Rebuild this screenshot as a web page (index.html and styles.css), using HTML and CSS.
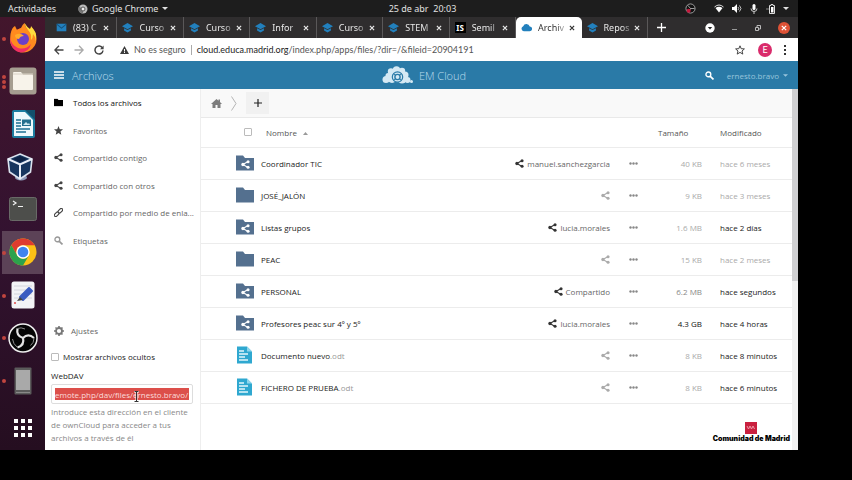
FILE: index.html
```html
<!DOCTYPE html>
<html lang="es">
<head>
  <meta charset="UTF-8" />
  <meta name="viewport" content="width=device-width, initial-scale=1" />
  <title>Archivos - EM Cloud</title>
  <link rel="stylesheet" href="styles.css">
</head>
<body>
  <!-- shared icons -->
  <svg class="sprite" width="0" height="0" aria-hidden="true">
    <symbol id="i-share" viewBox="0 0 16 16"><path d="M12.5 2.8 3.5 8l9 5.2" fill="none" stroke="currentColor" stroke-width="2"/><circle cx="3.4" cy="8" r="2.9"/><circle cx="12.6" cy="3" r="2.7"/><circle cx="12.6" cy="13" r="2.7"/></symbol>
    <symbol id="i-cap" viewBox="0 0 16 16"><path d="M8 1.5 0 6l8 4.500L16 6z"/><path d="M3 9v3.500l5 2.800 5-2.800V9l-5 2.800z"/></symbol>
    <symbol id="i-close" viewBox="0 0 10 10"><path d="M1.500 1.500l7 7m0-7l-7 7" stroke="currentColor" stroke-width="2" fill="none"/></symbol>
    <symbol id="i-folder" viewBox="0 0 18 16"><path d="M0 .5h7l2 2.500h9V15.500H0z"/></symbol>
    <symbol id="i-doc" viewBox="0 0 16 18"><path d="M1 .5h10l5 5V17.500H1z" fill="#2fa8d0"/><path d="M11 .5l5 5h-5z" fill="#8fd6ec"/><path d="M3 5h5M3 8h9M3 11h6M3 14h9" stroke="#e2f6fc" stroke-width="1.300"/></symbol>
    <symbol id="i-down" viewBox="0 0 8 4"><path d="M0 0h8L4 4z"/></symbol>
    <symbol id="i-search" viewBox="0 0 16 16"><circle cx="6" cy="6" r="4.300" fill="none" stroke="currentColor" stroke-width="2.400"/><path d="M9 9l6 6" stroke="currentColor" stroke-width="3"/></symbol>
    <symbol id="i-cloud" viewBox="0 0 16 12"><path d="M4 11.500a3.800 3.800 0 0 1-.8-7.300A5 5 0 0 1 12.700 4.500 3.500 3.500 0 0 1 12.500 11.500z"/></symbol>
    <symbol id="i-dots" viewBox="0 0 9 3"><circle cx="1.500" cy="1.500" r="1.200"/><circle cx="4.500" cy="1.500" r="1.200"/><circle cx="7.500" cy="1.500" r="1.200"/></symbol>
  </svg>

  <div class="desktop">
    <div class="topbar">
      <button class="activities">Actividades</button>
      <button class="app-menu">
        <svg width="10" height="10" viewBox="0 0 10 10"><circle cx="5" cy="5" r="4.500" fill="#bbb"/><path d="M5 5L1 2.500A4.500 4.500 0 0 0 5 9.500z" fill="#777"/><circle cx="5" cy="5" r="2" fill="#eee" stroke="#555"/></svg>
        Google Chrome
        <svg class="caret" width="6" height="3"><use href="#i-down"/></svg>
      </button>
      <span class="clock">25 de abr&nbsp; 20:03</span>
      <div class="tray">
        <svg class="tray-obs" width="11" height="11" viewBox="0 0 12 12"><circle cx="6" cy="6" r="5" fill="#111" stroke="#aaa"/><path d="M6 6L3 2.500M6 6h4.500M6 6L4 10" stroke="#aaa"/><circle cx="4" cy="8.500" r="2.200" fill="#c4183c"/></svg>
        <svg width="10" height="9" viewBox="0 0 10 9"><path d="M.5 3Q5-1 9.500 3" fill="none" stroke="#ddd"/><path d="M1.500 4Q5 1.500 8.500 4L5 8.500z" fill="#fff"/></svg>
        <svg width="10" height="9" viewBox="0 0 10 9"><path d="M0 3h2l3-3v9L2 6H0z" fill="#fff"/><path d="M6 3q1.500 1.500 0 3M7.500 1.500q3 3 0 6" fill="none" stroke="#bbb"/></svg>
        <svg width="8" height="10" viewBox="0 0 8 10"><rect x="2.500" width="3" height="6" rx="1.500" fill="#fff"/><path d="M1 4.500q0 3 3 3t3-3M4 7.500V10" fill="none" stroke="#ccc"/></svg>
        <svg width="9" height="10" viewBox="0 0 9 10"><path d="M0 5h3" stroke="#888"/><path d="M4 1.500h1V.5h2v1h1.500v8H3.500v-8z" fill="none" stroke="#ddd"/><path d="M5 3h2.500v5.500H5z" fill="#fff"/></svg>
        <svg class="caret" width="6" height="3"><use href="#i-down"/></svg>
      </div>
    </div>

    <div class="workspace">
      <nav class="dock" aria-label="Dock">
        <button class="dock-item run" aria-label="Firefox">
          <svg width="30" height="30" viewBox="0 0 30 30"><circle cx="15" cy="17" r="12" fill="#f4592b"/><path d="M2.500 11Q4 4 7 3l2 4 4-2q1-3 3.500-5Q17 4 20 7q3-1 3-3 5 4 5.500 12A13.500 13.500 0 0 1 15 29.500 13 13 0 0 1 2 17z" fill="#ff8a1f"/><path d="M2 14q1 8 8 11 8 2 13-4-2 8-10 8.500Q2 28 2 14z" fill="#ef2f63"/><path d="M16.500 0Q17 4 20 7q4 4 3 10 2-2 2-6 4 5 2 10 3-9-1-14l-3-4q0 3-1 3-3-2-5.500-6z" fill="#ffdc3e"/><circle cx="15" cy="16" r="6" fill="#6d3fc8"/><path d="M7 12q5-3 9 1-4 0-5 3-4 0-4-4z" fill="#ffab2b"/></svg>
        </button>
        <button class="dock-item run three" aria-label="Archivos">
          <svg width="28" height="28" viewBox="0 0 28 28"><rect x=".5" y=".5" width="27" height="27" rx="3" fill="#a59d90"/><path d="M4 6q0-1 1-1h7l2 2.500h9q1 0 1 1V22q0 1-1 1H5q-1 0-1-1z" fill="#f7f3ea"/><path d="M4 7h20" stroke="#d7d0c4"/></svg>
        </button>
        <button class="dock-item" aria-label="LibreOffice Writer">
          <svg width="24" height="28" viewBox="0 0 24 28"><path d="M3 0h12l9 8v18q0 2-2 2H3q-2 0-2-2V2q0-2 2-2z" fill="#1c7ca0"/><path d="M3 2h11l8 8v16H3z" fill="#eef8fc"/><path d="M14 0h10v10z" fill="#12506c"/><path d="M5 10h5M5 13h5M5 16h5M5 19h14M5 22h10" stroke="#1d6f93" stroke-width="1.400"/><path d="M11 9.500h9V16h-9z" fill="#246f8e"/><path d="M12 15l3-3 2 2 1-1 1 2z" fill="#cfe8f0"/></svg>
        </button>
        <button class="dock-item virtualbox" aria-label="VirtualBox">
          <svg width="26" height="28" viewBox="0 0 26 28"><ellipse cx="14" cy="24.500" rx="6" ry="3" fill="#8e99b8"/><path d="M13 1l12 5-1.500 13L13 26 2.500 19 1 6z" fill="#17365f" stroke="#dbe3ef" stroke-width="1.600"/><path d="M1 6l12 5.500L25 6M13 11.500V26" fill="none" stroke="#e9eff8" stroke-width="2"/><path d="M6 6l7-3 7 3-7 3z" fill="#0c2144"/></svg>
        </button>
        <button class="dock-item" aria-label="Terminal">
          <svg width="28" height="24" viewBox="0 0 28 24"><rect x=".5" y=".5" width="27" height="23" rx="2" fill="#4d4e4b" stroke="#696a67"/><path d="M4 4l3 2-3 2M9 9.500h5" fill="none" stroke="#f2f2f2" stroke-width="1.200"/></svg>
        </button>
        <button class="dock-item run active" aria-label="Google Chrome">
          <svg width="28" height="28" viewBox="0 0 28 28"><circle cx="14" cy="14" r="13.500" fill="#fbc116"/><path d="M2.300 7.250A13.500 13.500 0 0 1 25.700 7.250H14a6.750 6.750 0 0 0-5.850 10.100z" fill="#df3b2f"/><path d="M2.300 7.250l5.850 10.100A6.750 6.750 0 0 0 19.850 17.400L14 27.500A13.500 13.500 0 0 1 2.300 7.250z" fill="#2ca24c"/><circle cx="14" cy="14" r="6.700" fill="#fff"/><circle cx="14" cy="14" r="5.300" fill="#3f84ee"/></svg>
        </button>
        <button class="dock-item run" aria-label="Editor de textos">
          <svg width="24" height="28" viewBox="0 0 24 28"><rect x=".5" y=".5" width="23" height="27" rx="2.500" fill="#f3f3f6"/><path d="M3 5h18M3 9h18M3 13h18M3 17h18" stroke="#d3d4dc"/><path d="M9 16l9-9 3 3-9 9z" fill="#3b5cc0" stroke="#3b5cc0" stroke-linejoin="round" stroke-width="2"/><path d="M6 20l3-4 3 3z" fill="#444"/><circle cx="4" cy="22" r="1" fill="#e04848"/></svg>
        </button>
        <button class="dock-item run" aria-label="OBS">
          <svg width="30" height="30" viewBox="0 0 30 30"><circle cx="15" cy="15" r="14" fill="#050505" stroke="#efefef" stroke-width="1.500"/><path d="M15 15Q8 13 9.500 5.500M15 15q5.200-5.100 11 0M15 15q1.800 7.100-5.500 9.500" fill="none" stroke="#e4e4e4" stroke-width="2.200"/><path d="M9.500 5.500Q13 4 17 6M26 15q0 5-3.500 7.500M9.500 24.500Q5 21 4.500 16" fill="none" stroke="#8c8c8c"/></svg>
        </button>
        <button class="dock-item run" aria-label="Disco">
          <svg width="18" height="28" viewBox="0 0 18 28"><rect x=".5" y=".5" width="17" height="27" rx="1" fill="#5b5b5b"/><rect x="2" y="3" width="14" height="20" fill="#a9a9a9"/><path d="M2 25.500h14" stroke="#888"/></svg>
        </button>
        <button class="dock-apps" aria-label="Mostrar aplicaciones">
          <svg width="20" height="20" viewBox="0 0 20 20"><path d="M1 1h4v4H1zM8 1h4v4H8zM15 1h4v4h-4zM1 8h4v4H1zM8 8h4v4H8zM15 8h4v4h-4zM1 15h4v4H1zM8 15h4v4H8zM15 15h4v4h-4z"/></svg>
        </button>
      </nav>

      <div class="browser">
        <div class="tabstrip">
          <div class="tabs">
            <div class="tab"><svg class="fav" viewBox="0 0 16 16"><path d="M1 2.500h14v11H1z"/><path d="M1 3l7 6 7-6" fill="none" stroke="#15527c" stroke-width="1.500"/></svg><span>(83) C</span><button aria-label="Cerrar"><svg><use href="#i-close"/></svg></button></div>
            <div class="tab"><svg class="fav"><use href="#i-cap"/></svg><span>Curso</span><button aria-label="Cerrar"><svg><use href="#i-close"/></svg></button></div>
            <div class="tab"><svg class="fav"><use href="#i-cap"/></svg><span>Curso</span><button aria-label="Cerrar"><svg><use href="#i-close"/></svg></button></div>
            <div class="tab"><svg class="fav"><use href="#i-cap"/></svg><span>Infor</span><button aria-label="Cerrar"><svg><use href="#i-close"/></svg></button></div>
            <div class="tab"><svg class="fav"><use href="#i-cap"/></svg><span>Curso</span><button aria-label="Cerrar"><svg><use href="#i-close"/></svg></button></div>
            <div class="tab"><svg class="fav"><use href="#i-cap"/></svg><span>STEM</span><button aria-label="Cerrar"><svg><use href="#i-close"/></svg></button></div>
            <div class="tab"><b class="fav-is">IS</b><span>Semil</span><button aria-label="Cerrar"><svg><use href="#i-close"/></svg></button></div>
            <div class="tab current"><svg class="fav"><use href="#i-cloud"/></svg><span>Archiv</span><button aria-label="Cerrar"><svg><use href="#i-close"/></svg></button></div>
            <div class="tab"><svg class="fav"><use href="#i-cap"/></svg><span>Repos</span><button aria-label="Cerrar"><svg><use href="#i-close"/></svg></button></div>
          </div>
          <div class="window-controls">
            <button aria-label="Nueva pestaña"><svg width="9" height="9" viewBox="0 0 9 9"><path d="M4.500 0v9M0 4.500h9" stroke="#fff" stroke-width="1.300"/></svg></button>
            <button class="push" aria-label="Buscar pestañas"><svg width="10" height="10" viewBox="0 0 10 10"><circle cx="5" cy="5" r="4.700" fill="#fff"/><path d="M2.800 4h4.400L5 6.500z" fill="#222"/></svg></button>
            <button aria-label="Minimizar"><svg width="6" height="6" viewBox="0 0 6 6"><path d="M0 4.500h5" stroke="#999"/></svg></button>
            <button aria-label="Restaurar"><svg width="6" height="6" viewBox="0 0 6 6"><path d="M.5 2.500h3v3h-3zM2 2V.5h3.500V4H4" fill="none" stroke="#bbb"/></svg></button>
            <button aria-label="Cerrar ventana"><svg width="12" height="12" viewBox="0 0 12 12"><circle cx="6" cy="6" r="6" fill="#de5236"/><path d="M3.800 3.800l4.400 4.400m0-4.400L3.800 8.200" stroke="#fff" stroke-width="1.200"/></svg></button>
          </div>
        </div>

        <div class="toolbar">
          <button aria-label="Atrás"><svg width="10" height="10" viewBox="0 0 10 10"><path d="M5 .8L.9 5 5 9.200M1 5h8.500" fill="none" stroke="#444" stroke-width="1.300"/></svg></button>
          <button aria-label="Adelante"><svg width="10" height="10" viewBox="0 0 10 10"><path d="M5 .8L9.100 5 5 9.200M9 5H.5" fill="none" stroke="#aaa" stroke-width="1.300"/></svg></button>
          <button aria-label="Recargar"><svg width="10" height="10" viewBox="0 0 10 10"><path d="M8.500 3A4 4 0 1 0 9 5.500" fill="none" stroke="#444" stroke-width="1.500"/><path d="M9.600.5V4.200H6z" fill="#444"/></svg></button>
          <a class="address" href="#">
            <svg width="9" height="8" viewBox="0 0 9 8"><path d="M4.500 0L9 8H0z" fill="#3c3c3c"/><path d="M4.500 3v2.500M4.500 6v1" stroke="#fff"/></svg>
            <span class="insecure">No es seguro</span>
            <span class="url"><b>cloud.educa.madrid.org</b>/index.php/apps/files/?dir=/&amp;fileid=20904191</span>
          </a>
          <button aria-label="Favorito"><svg width="10" height="10" viewBox="0 0 10 10"><path d="M5 .8l1.200 2.900 3.200.2L7 6l.8 3.100L5 7.400 2.200 9.100 3 6 .6 3.900l3.200-.2z" fill="none" stroke="#444"/></svg></button>
          <button class="avatar">E</button>
          <button aria-label="Menú"><svg width="3" height="10" viewBox="0 0 3 10"><path d="M0 1h2M0 5h2M0 9h2" stroke="#333" stroke-width="2"/></svg></button>
        </div>

        <header class="cloud-header">
          <button class="app-name">
            <svg width="10" height="8" viewBox="0 0 10 8"><path d="M0 1h10M0 4h10M0 7h10" stroke="#fff" stroke-width="1.300"/></svg>
            Archivos
          </button>
          <a class="brand" href="#">
            <svg width="31" height="18" viewBox="0 0 31 18"><g fill="#d5e9f4"><circle cx="4" cy="13.500" r="3.500"/><circle cx="6" cy="9.500" r="2.500"/><circle cx="9" cy="5.500" r="3.200"/><circle cx="14.500" cy="4" r="3.700"/><circle cx="20" cy="5" r="3.200"/><circle cx="23" cy="9" r="3.500"/><circle cx="25.500" cy="14" r="3"/><circle cx="29.500" cy="15.500" r="1.500"/><circle cx="10" cy="12" r="5"/><circle cx="20" cy="13" r="4.500"/></g><circle cx="15.500" cy="11" r="5.200" fill="#d5e9f4" stroke="#2b7ba8" stroke-width="1.200"/><circle cx="15.500" cy="11" r="2.600" fill="none" stroke="#2b7ba8" stroke-width="1.400"/><path d="M12 8l2 1.500M19 8l-2 1.500M12 14l2-1.500M19 14l-2-1.500" stroke="#2b7ba8"/></svg>
            EM Cloud
          </a>
          <div class="header-right">
            <button aria-label="Buscar"><svg width="9" height="9"><use href="#i-search"/></svg></button>
            <button class="user">ernesto.bravo <svg width="5" height="3"><use href="#i-down"/></svg></button>
          </div>
        </header>

        <div class="files-app">
          <aside class="sidebar">
            <nav class="views">
              <a class="selected" href="#"><svg viewBox="0 0 18 16"><use href="#i-folder"/></svg><span>Todos los archivos</span></a>
              <a href="#"><svg viewBox="0 0 10 10"><path d="M5 0l1.400 3.500 3.600.2-2.800 2.400.9 3.600L5 7.800 1.900 9.700l.9-3.600L0 3.700l3.600-.2z"/></svg><span>Favoritos</span></a>
              <a href="#"><svg><use href="#i-share"/></svg><span>Compartido contigo</span></a>
              <a href="#"><svg><use href="#i-share"/></svg><span>Compartido con otros</span></a>
              <a href="#"><svg viewBox="0 0 10 10"><g fill="none" stroke="currentColor" stroke-width="1.300"><rect x="4" y="1.500" width="6" height="3.200" rx="1.600" transform="rotate(-45 7 3)"/><rect x="0" y="5.300" width="6" height="3.200" rx="1.600" transform="rotate(-45 3 7)"/></g></svg><span>Compartido por medio de enla...</span></a>
              <a href="#" class="tags"><svg><use href="#i-search"/></svg><span>Etiquetas</span></a>
            </nav>
            <div class="settings">
              <button class="settings-toggle"><svg width="10" height="10" viewBox="0 0 10 10"><circle cx="5" cy="5" r="3" fill="none" stroke="#777" stroke-width="1.800"/><path d="M5 0v2M5 8v2M0 5h2M8 5h2M1.500 1.500l1.300 1.300M7.200 7.200l1.300 1.300M8.500 1.500L7.200 2.800M2.800 7.200L1.500 8.500" stroke="#777" stroke-width="1.600"/></svg>Ajustes</button>
              <div class="option"><input type="checkbox" id="showHidden"><label for="showHidden">Mostrar archivos ocultos</label></div>
              <label class="webdav-label" for="webdav">WebDAV</label>
              <div class="webdav">
                <input type="text" id="webdav" value="emote.php/dav/files/ernesto.bravo/" readonly>
                <svg class="cursor" width="5" height="11" viewBox="0 0 5 11"><path d="M0 .5h5M2.500 0v11M0 10.500h5" stroke="#fff" stroke-width="2"/><path d="M.5.500h4M2.500 1v9M.5 10.500h4" stroke="#333"/></svg>
              </div>
              <p>Introduce esta dirección en el cliente de ownCloud para acceder a tus archivos a través de él</p>
            </div>
          </aside>

          <main class="content">
            <div class="crumbs">
              <a href="#" aria-label="Inicio"><svg width="11" height="9" viewBox="0 0 11 9"><path d="M5.500 0L0 5h1.500v4H4.500V6h2v3h3V5H11L9 3V.5H7.500v1.200z" fill="#7d7d7d"/></svg></a>
              <svg width="6" height="15" viewBox="0 0 6 15"><path d="M.5.500l4.500 7-4.500 7" fill="none" stroke="#b5b5b5"/></svg>
              <button aria-label="Nuevo"><svg width="8" height="8" viewBox="0 0 8 8"><path d="M4 0v8M0 4h8" stroke="#222" stroke-width="1.200"/></svg></button>
            </div>
            <table class="files">
              <thead>
                <tr>
                  <th class="pick"><input type="checkbox" aria-label="Seleccionar todo"></th>
                  <th class="name">Nombre <svg width="5" height="3" viewBox="0 0 5 3"><path d="M0 3h5L2.500 0z"/></svg></th>
                  <th class="share"></th>
                  <th class="menu"></th>
                  <th class="size">Tamaño</th>
                  <th class="date">Modificado</th>
                </tr>
              </thead>
              <tbody id="fileList"></tbody>
            </table>
            <footer class="madrid">
              <svg width="12" height="12" viewBox="0 0 12 12"><path d="M0 0h12v12H0z" fill="#c9203f"/><path d="M2 4l1.500 3L5 4l1.500 3L8 4l1.500 3" fill="none" stroke="#ee9aa8"/></svg>
              <strong>Comunidad de Madrid</strong>
            </footer>
          </main>
          <div class="scroll"><div class="thumb"></div></div>
        </div>
      </div>
    </div>
  </div>

  <script>
    const files = [
      { name: 'Coordinador TIC', shared: 'manuel.sanchezgarcia', icon: 'shared', size: '40 KB', date: 'hace 6 meses', old: true },
      { name: 'JOSÉ_JALÓN', icon: 'folder', size: '9 KB', date: 'hace 3 meses', old: true },
      { name: 'Listas grupos', shared: 'lucia.morales', icon: 'shared', size: '1.6 MB', date: 'hace 2 días' },
      { name: 'PEAC', icon: 'folder', size: '15 KB', date: 'hace 2 meses', old: true },
      { name: 'PERSONAL', shared: 'Compartido', icon: 'shared', size: '6.2 MB', date: 'hace segundos', mid: true },
      { name: 'Profesores peac sur 4º y 5º', shared: 'lucia.morales', icon: 'shared', size: '4.3 GB', date: 'hace 4 horas', big: true },
      { name: 'Documento nuevo', ext: '.odt', icon: 'doc', size: '8 KB', date: 'hace 8 minutos' },
      { name: 'FICHERO DE PRUEBA', ext: '.odt', icon: 'doc', size: '8 KB', date: 'hace 6 minutos' }
    ];

    function fileIcon(type) {
      if (type === 'doc') {
        return '<svg width="16" height="18"><use href="#i-doc"/></svg>';
      }
      const badge = type === 'shared' ? '<use class="badge" href="#i-share" x="5" y="5" width="9" height="9"/>' : '';
      return `<svg width="18" height="16"><use href="#i-folder"/>${badge}</svg>`;
    }

    document.getElementById('fileList').innerHTML = files.map(file => `
      <tr>
        <td class="pick">${fileIcon(file.icon)}</td>
        <td class="name"><a href="#">${file.name}<span>${file.ext || ''}</span></a></td>
        <td class="share ${file.shared ? 'on' : ''}"><button aria-label="Compartir"><svg width="9" height="9"><use href="#i-share"/></svg>${file.shared || ''}</button></td>
        <td class="menu"><button aria-label="Acciones"><svg width="9" height="3"><use href="#i-dots"/></svg></button></td>
        <td class="size ${file.big ? 'big' : ''} ${file.mid ? 'mid' : ''}">${file.size}</td>
        <td class="date ${file.old ? 'old' : ''}">${file.date}</td>
      </tr>
    `).join('');
  </script>
</body>
</html>
```
FILE: styles.css
```css
* {
  box-sizing: border-box;
}

body {
  margin: 0;
  padding: 0 54px 30px 0;
  background: #000;
  font-family: "Open Sans", "Noto Sans", sans-serif;
  font-size: 8px;
  color: #222;
}

button {
  display: flex;
  align-items: center;
  margin: 0;
  padding: 0;
  border: none;
  background: none;
  font: inherit;
  color: inherit;
  cursor: pointer;
}

a {
  color: inherit;
  text-decoration: none;
}

svg {
  display: block;
  flex: none;
  fill: currentColor;
}

.sprite {
  position: absolute;
}

input[type="checkbox"] {
  appearance: none;
  width: 8px;
  height: 8px;
  margin: 0;
  border: 1px solid #bbb;
  border-radius: 1px;
  background: #fff;
}

.desktop {
  display: flex;
  flex-direction: column;
  min-height: calc(100vh - 30px);
}

/* GNOME top bar */
.topbar {
  display: grid;
  grid-template-columns: 1fr auto 1fr;
  align-items: center;
  height: 17px;
  padding: 0 9px 0 8px;
  background: #1d1d1d;
  color: #e2e2e2;
  font-family: "Noto Sans", sans-serif;
  font-size: 9px;
}

.activities {
  grid-area: 1 / 1;
}

.app-menu {
  grid-area: 1 / 1;
  margin-left: 70px;
  gap: 4px;
}

.clock {
  margin-left: 48px;
}

.tray {
  display: flex;
  align-items: center;
  justify-content: flex-end;
  gap: 8px;
}

.tray-obs {
  margin-right: 10px;
}

.workspace {
  display: flex;
  flex: 1;
}

/* dock */
.dock {
  display: grid;
  grid-template-rows: repeat(9, 1fr) 48px;
  flex: none;
  width: 45px;
  background: linear-gradient(#43162c, #331230 50%, #250e20);
}

.dock-item {
  position: relative;
  justify-content: center;
  margin: 0 2px;
}

.dock-item.active {
  background: #5c4257;
}

.dock-item.run::before {
  content: "";
  position: absolute;
  left: 0;
  top: 20px;
  width: 4px;
  height: 4px;
  border-radius: 50%;
  background: #c0453f;
}

.dock-item.three::before {
  box-shadow: 0 -5px #c0453f, 0 5px #c0453f;
}

.dock-item.virtualbox {
  padding-right: 5px;
}

.dock-apps {
  justify-content: center;
  padding-top: 4px;
  color: #fff;
}

.browser {
  display: flex;
  flex-direction: column;
  flex: 1;
  min-width: 0;
  background: #fff;
}

/* tabs */
.tabstrip {
  display: flex;
  height: 21px;
  padding-left: 6px;
  background: #2f2d2e;
  color: #e8e8e8;
  font-family: "Noto Sans", sans-serif;
  font-size: 9px;
}

.tabs {
  display: flex;
  flex: 1;
  min-width: 0;
}

.tab {
  display: flex;
  align-items: center;
  flex: 1;
  min-width: 0;
  padding: 0 7px 0 5px;
  border-right: 1px solid #5a5859;
}

.tab span {
  flex: 1;
  margin-left: 6px;
  white-space: nowrap;
  mask-image: linear-gradient(to right, #000 65%, transparent 110%);
}

.tab button {
  margin-left: 3px;
}

.tab button svg {
  width: 6px;
  height: 6px;
}

.fav {
  width: 11px;
  height: 11px;
  color: #2280bd;
}

.fav-is {
  width: 11px;
  background: #000;
  color: #fff;
  font-size: 8px;
  text-align: center;
}

.tab.current {
  border-radius: 5px 5px 0 0;
  border-right: none;
  background: #fff;
  color: #333;
}

.window-controls {
  display: flex;
  align-items: center;
  gap: 17px;
  width: 150px;
  padding: 0 8px 0 9px;
}

.window-controls .push {
  margin-left: auto;
}

/* address bar */
.toolbar {
  display: flex;
  align-items: center;
  gap: 10px;
  height: 23px;
  padding: 0 11px 0 9px;
  font-family: Lato, sans-serif;
  font-size: 9px;
  color: #555;
}

.address {
  display: flex;
  align-items: center;
  flex: 1;
  margin-left: 6px;
  white-space: nowrap;
}

.insecure {
  margin: 0 5px;
  padding-right: 5px;
  border-right: 1px solid #aaa;
  line-height: 10px;
}

.url b {
  color: #222;
  font-weight: normal;
}

.avatar {
  justify-content: center;
  width: 14px;
  height: 14px;
  margin: 0 2px 0 3px;
  border-radius: 50%;
  background: #d92b6b;
  color: #fff;
}

/* ownCloud header */
.cloud-header {
  display: grid;
  grid-template-columns: 1fr auto 1fr;
  align-items: center;
  height: 28px;
  padding: 0 10px 0 9px;
  background: #2a7aa7;
  color: #bcdcec;
  font-size: 11px;
  font-weight: 300;
}

.app-name {
  gap: 8px;
}

.brand {
  display: flex;
  align-items: center;
  gap: 6px;
  margin-left: 6px;
}

.header-right {
  display: flex;
  align-items: center;
  justify-content: flex-end;
  gap: 13px;
  color: #fff;
}

.user {
  gap: 4px;
  color: #98c5dc;
  font-size: 8px;
  font-weight: 400;
}

.files-app {
  display: flex;
  flex: 1;
}

/* sidebar */
.sidebar {
  display: flex;
  flex-direction: column;
  flex: none;
  width: 156px;
  border-right: 1px solid #eee;
}

.views {
  display: grid;
  grid-auto-rows: 1fr;
  height: 165px;
}

.views a {
  display: flex;
  align-items: center;
  gap: 10px;
  padding: 0 4px 0 9px;
  color: #666;
  white-space: nowrap;
}

.views a.selected {
  color: #111;
}

.views svg {
  width: 9px;
  height: 9px;
  color: #444;
}

.views .selected svg {
  color: #000;
}

.views .tags svg {
  color: #999;
}

.settings {
  margin-top: auto;
  padding: 0 7px 6px 6px;
}

.settings-toggle {
  gap: 7px;
  margin: 0 0 15px 3px;
  color: #666;
}

.option {
  display: flex;
  align-items: center;
  gap: 4px;
  margin-bottom: 8px;
}

.webdav-label {
  display: block;
  margin-bottom: 3px;
}

.webdav {
  position: relative;
}

.webdav input {
  width: 100%;
  height: 20px;
  padding: 3px;
  border: 1px solid #ddd;
  border-radius: 2px;
  background: #dc4f4a content-box;
  color: #fbdcda;
  font: inherit;
}

.cursor {
  position: absolute;
  left: 83px;
  top: 7px;
}

.settings p {
  margin: 1px 0 0;
  color: #888;
  line-height: 13px;
}

/* file list */
.content {
  display: flex;
  flex-direction: column;
  flex: 1;
  min-width: 0;
}

.crumbs {
  display: flex;
  align-items: center;
  gap: 9px;
  height: 29px;
  padding-left: 10px;
  border-bottom: 1px solid #e9e9e9;
  background: #f9f9f9;
}

.crumbs button {
  justify-content: center;
  width: 23px;
  height: 22px;
  background: #f1f1f1;
}

.files {
  width: 100%;
  border-collapse: collapse;
  table-layout: fixed;
}

.files th,
.files td {
  height: 32px;
  padding: 0;
  border-bottom: 1px solid #ececec;
  text-align: left;
  font-weight: normal;
  white-space: nowrap;
}

.files th {
  height: 29px;
  color: #555;
}

.files .pick {
  width: 56px;
  padding-left: 35px;
}

.files th.pick {
  padding-left: 43px;
}

.pick svg {
  color: #54708f;
}

.pick .badge {
  color: #fff;
  fill: #fff;
}

.files .name {
  padding-left: 4px;
}

.files th.name {
  padding-left: 9px;
}

th.name svg {
  display: inline-block;
  margin-left: 4px;
  vertical-align: middle;
  color: #999;
}

.name span {
  color: #999;
}

.files .share {
  width: 120px;
}

.share button {
  gap: 3px;
  margin-left: auto;
  color: #aaa;
}

.share.on button {
  color: #666;
}

.share.on svg {
  color: #333;
}

.files .menu {
  width: 46px;
}

.menu button {
  margin: 0 auto;
  color: #888;
}

.files .size {
  width: 46px;
  padding-left: 2px;
}

.files td.size {
  color: #aaa;
  text-align: right;
}

.files td.mid {
  color: #888;
}

.files td.big {
  color: #111;
}

.files .date {
  width: 90px;
  padding-left: 18px;
}

.files td.old {
  color: #aaa;
}

.madrid {
  display: flex;
  flex-direction: column;
  align-items: center;
  align-self: flex-end;
  margin-top: auto;
  padding: 0 2px 7px 0;
  color: #000;
  font-family: Inter, sans-serif;
  font-size: 7px;
}

.madrid strong {
  font-weight: 900;
}

.scroll {
  flex: none;
  width: 6px;
  background: #f1f1f1;
}

.thumb {
  height: 192px;
  background: #cfcfd1;
}
```
